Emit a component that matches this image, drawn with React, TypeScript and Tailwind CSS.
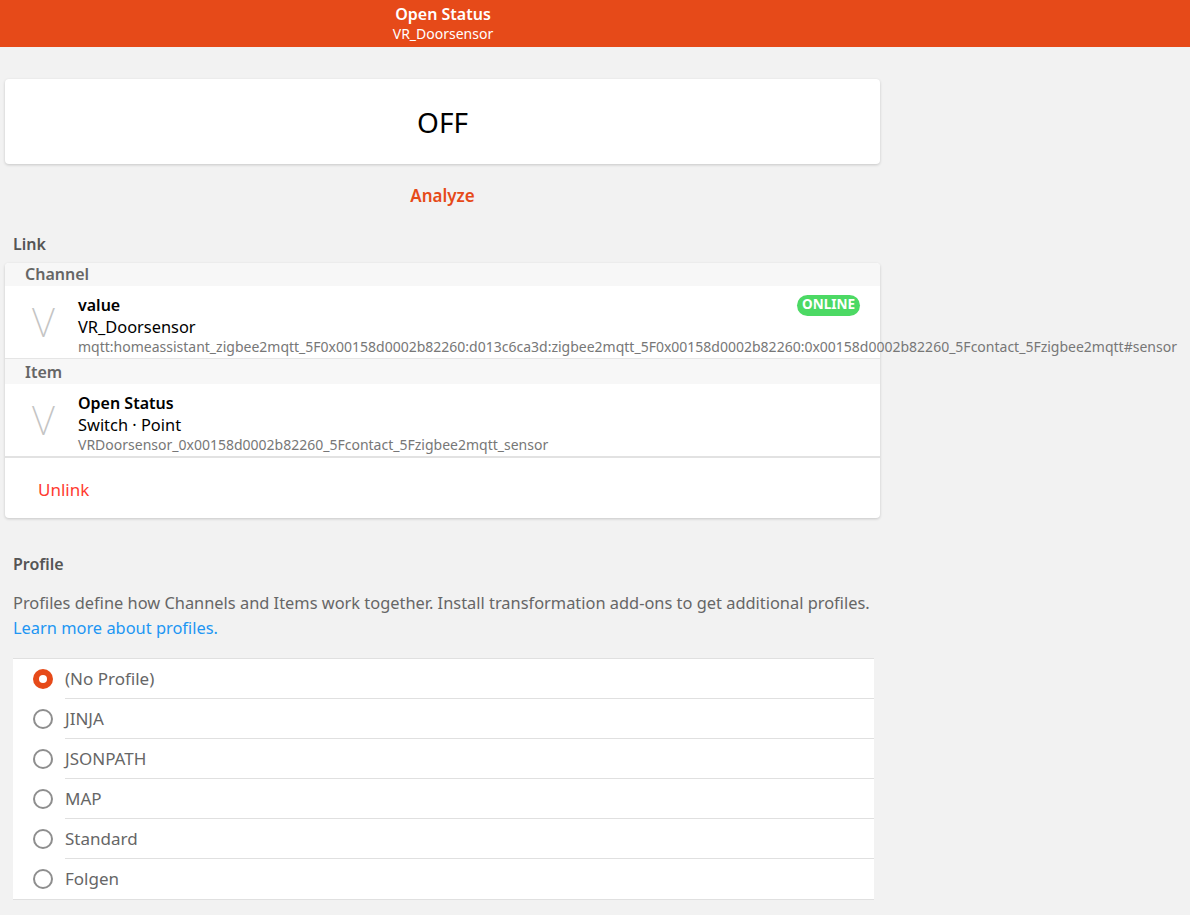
import React from 'react';

const profiles = ['(No Profile)', 'JINJA', 'JSONPATH', 'MAP', 'Standard', 'Folgen'];

const LinkRow = ({ title, sub, footer, badge }: { title: string; sub: string; footer: string; badge?: boolean }) => (
  <div className="flex h-[72px] bg-white">
    <div className="w-[73px] flex items-center justify-center text-[40px] font-extralight text-[#c4c4c4] leading-none pl-[4px]">V</div>
    <div className="flex-1 min-w-0 flex flex-col pt-[8px] pr-[20px]">
      <div className="flex items-center justify-between h-[22px]">
        <span className="text-[16px] font-semibold text-black leading-none">{title}</span>
        {badge && (
          <span className="bg-[#4cd964] text-white text-[13.5px] font-bold rounded-full px-[5px] h-[21px] flex items-center leading-none">ONLINE</span>
        )}
      </div>
      <div className="text-[16.4px] text-black leading-[21px]">{sub}</div>
      <div className="text-[14px] text-[#777] leading-[19px] whitespace-nowrap overflow-visible">{footer}</div>
    </div>
  </div>
);

export default function App() {
  return (
    <div className="min-h-[915px] bg-[#f2f2f2] text-black" style={{ fontFamily: '"Noto Sans", "Open Sans", sans-serif' }}>
      <div className="h-[47px] bg-[#e64a19] text-white">
        <div className="w-[886px] h-full flex flex-col items-center justify-center">
          <div className="text-[16px] font-semibold leading-[20px]">Open Status</div>
          <div className="text-[14px] leading-[19px]">VR_Doorsensor</div>
        </div>
      </div>

      <div className="w-[880px] pl-[5px] pt-[32px]">
        <div className="bg-white rounded-[4px] shadow-[0_1px_3px_rgba(0,0,0,0.18)] h-[85px] flex items-center justify-center text-[28px]">OFF</div>
        <div className="h-[64px] flex items-center justify-center text-[#e64a19] text-[17px] font-semibold">Analyze</div>

        <div className="pl-[8px] text-[16px] font-semibold text-[#555] leading-[22px] pt-[5px] pb-[8px]">Link</div>
        <div className="bg-white rounded-[4px] shadow-[0_1px_3px_rgba(0,0,0,0.18)]">
          <div className="h-[23px] bg-[#f7f7f7] rounded-t-[4px] pl-[20px] text-[16px] font-semibold text-[#666] leading-[23px]">Channel</div>
          <LinkRow
            title="value"
            sub="VR_Doorsensor"
            footer="mqtt:homeassistant_zigbee2mqtt_5F0x00158d0002b82260:d013c6ca3d:zigbee2mqtt_5F0x00158d0002b82260:0x00158d0002b82260_5Fcontact_5Fzigbee2mqtt#sensor"
            badge
          />
          <div className="h-[3px] bg-[#f7f7f7] border-t border-[#e5e5e5]" />
          <div className="h-[23px] bg-[#f7f7f7] pl-[20px] text-[16px] font-semibold text-[#666] leading-[23px]">Item</div>
          <LinkRow
            title="Open Status"
            sub="Switch · Point"
            footer="VRDoorsensor_0x00158d0002b82260_5Fcontact_5Fzigbee2mqtt_sensor"
          />
          <div className="border-t-2 border-[#e2e2e2] h-[62px] flex items-center pl-[33px] pt-[3px] text-[17px] text-[#ff3b30]">Unlink</div>
        </div>

        <div className="pl-[8px] pt-[35px] text-[16px] font-semibold text-[#555] leading-[22px]">Profile</div>
        <div className="pl-[8px] pt-[15px] text-[16.4px] text-[#666] leading-[25px]">
          Profiles define how Channels and Items work together. Install transformation add-ons to get additional profiles.
          <div className="text-[#2196f3]">Learn more about profiles.</div>
        </div>

        <div className="ml-[8px] mt-[18px] w-[861px] bg-white border-y border-[#e0e0e0]">
          {profiles.map((p, i) => (
            <div key={p} className="flex items-center h-[40px]">
              <div className="w-[52px] pl-[20px] flex">
                {i === 0 ? (
                  <span className="w-[20px] h-[20px] rounded-full bg-[#e64a19] flex items-center justify-center">
                    <span className="w-[8px] h-[8px] rounded-full bg-white" />
                  </span>
                ) : (
                  <span className="w-[20px] h-[20px] rounded-full border-2 border-[#8e8e8e]" />
                )}
              </div>
              <div className={`flex-1 h-full flex items-center text-[17px] text-[#666] ${i < profiles.length - 1 ? 'border-b border-[#e0e0e0]' : ''}`}>{p}</div>
            </div>
          ))}
        </div>
      </div>
    </div>
  );
}
